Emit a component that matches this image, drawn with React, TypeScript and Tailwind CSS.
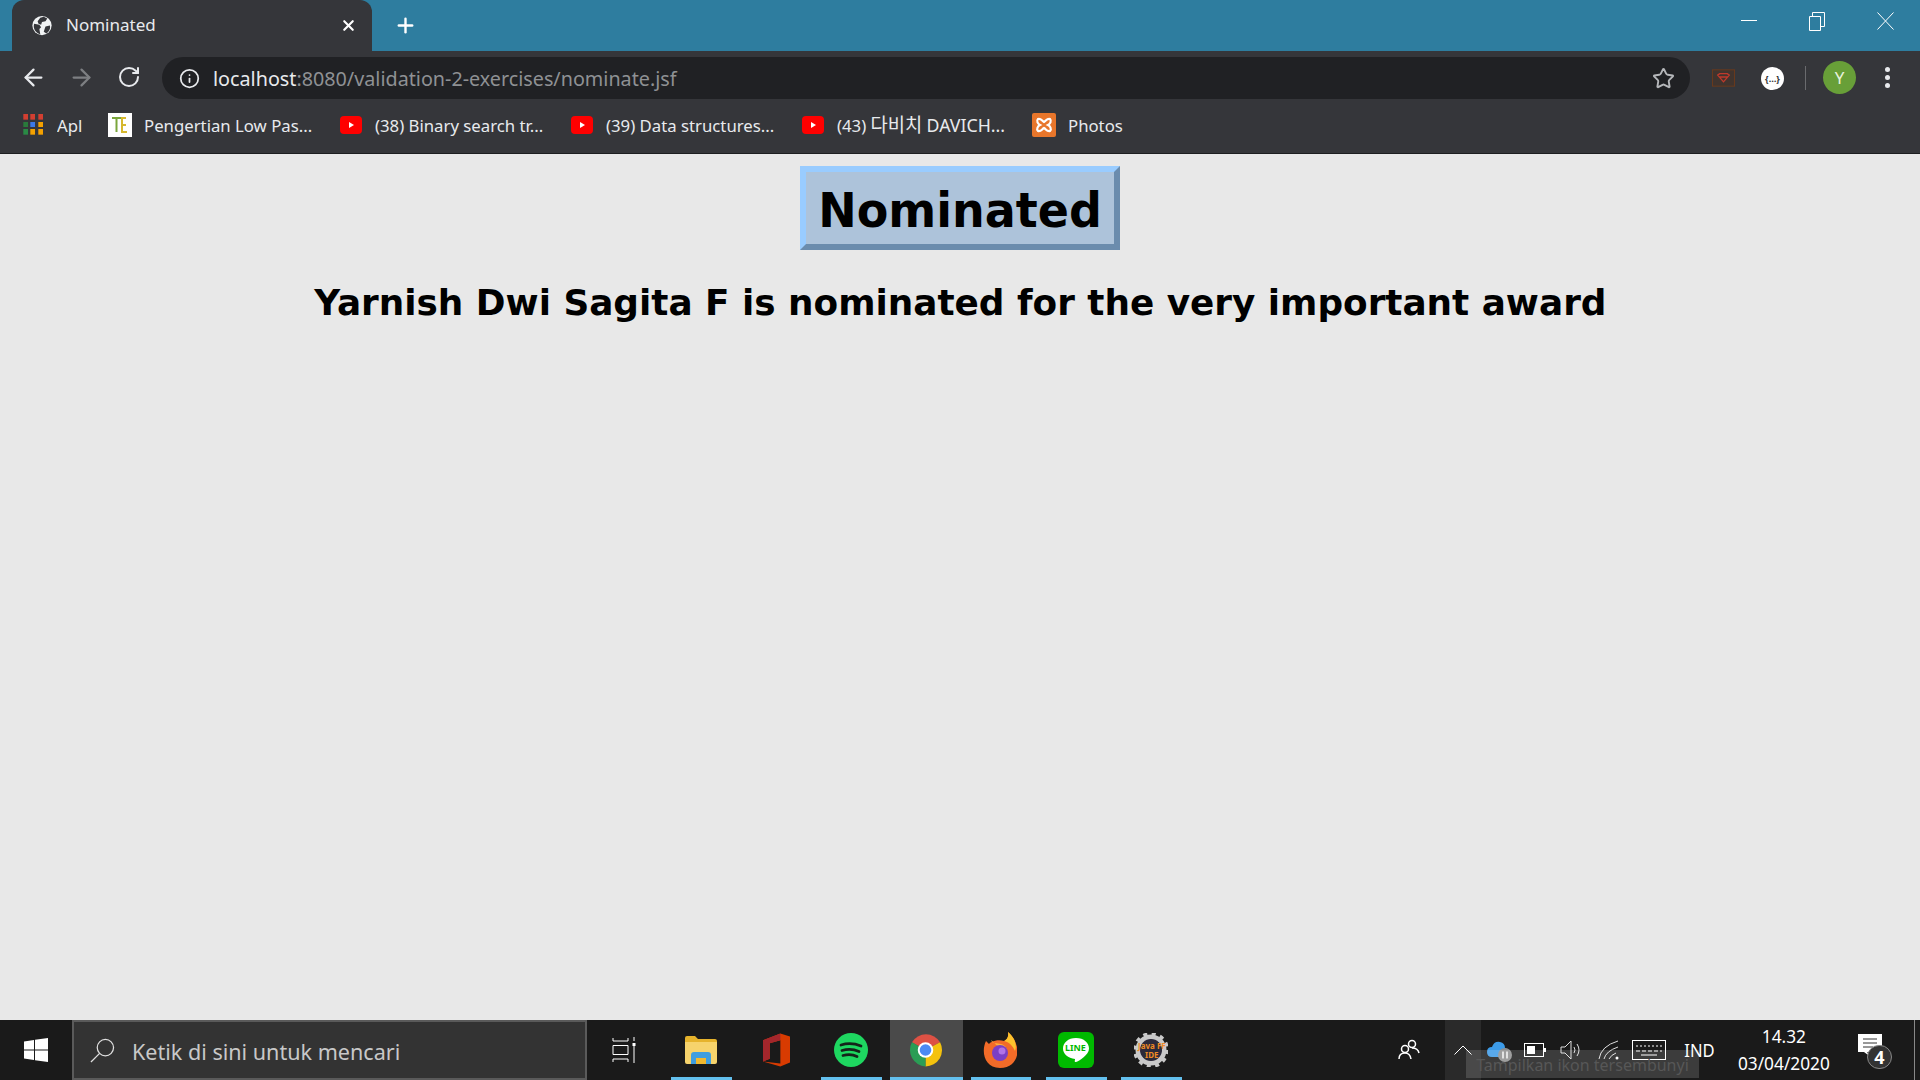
import { ArrowLeft, ArrowRight, RotateCw, Info, Star, X, Plus } from "lucide-react";

const sans = "font-['Noto_Sans','Noto_Sans_CJK_KR',sans-serif]";

function Youtube({ className }: { className: string }) {
  return (
    <svg viewBox="0 0 22 18" className={`w-[22px] h-[18px] shrink-0 ${className}`}>
      <rect width="22" height="18" rx="4" fill="#f00" />
      <path d="M9 6l5 3-5 3z" fill="#fff" />
    </svg>
  );
}

function AppsGrid() {
  const colors = ["#d23f31", "#d23f31", "#d23f31", "#2a7a3b", "#3b78e7", "#f4a100", "#2a8a45", "#f4a100", "#f4a100"];
  return (
    <div className="grid grid-cols-3 gap-[2px] w-5 h-[21px] shrink-0">
      {colors.map((c, i) => (
        <svg key={i} viewBox="0 0 5 6" className="w-full h-full">
          <rect width="5" height="6" fill={c} />
        </svg>
      ))}
    </div>
  );
}

function Bookmark({ children, className }: { children: React.ReactNode; className: string }) {
  return <span className={`text-[17px] leading-none text-[#e8eaed] whitespace-nowrap scale-x-[0.985] origin-left mt-[1px] ${className}`}>{children}</span>;
}

function TaskIcon({ active, lit, width, children }: { active?: boolean; lit?: boolean; width: string; children: React.ReactNode }) {
  return (
    <div className={`h-full flex items-center justify-center relative pr-[2px] ${width} ${lit ? "bg-[#4a4a4a]" : ""}`}>
      {children}
      {active && <div className="absolute bottom-0 left-0 right-0 h-[3px] bg-[#63c0ee]" />}
    </div>
  );
}

export default function App() {
  return (
    <div className={`w-[1920px] h-[1080px] flex flex-col overflow-hidden bg-[#e8e8e8] ${sans}`}>
      {/* title bar */}
      <div className="h-[51px] bg-[#2e7d9f] flex items-end shrink-0">
        <div className="ml-3 w-[360px] h-full bg-[#35363a] rounded-t-[12px] flex items-center">
          <svg viewBox="0 0 24 24" className="ml-[19px] w-[22px] h-[21px] shrink-0">
            <circle cx="12" cy="12" r="11" fill="#f1f3f4" />
            <path d="M3 10l6 1 2 3-2 2 1 6C6 21 1 16 3 10zM14 2l4 2-2 3-4 1-1 3-3-1-1-3 3-4zM16 13l5-1c1 4-1 7-4 9l-3-2 1-3z" fill="#35363a" />
          </svg>
          <span className="ml-[13px] -mt-[2px] text-[17px] text-[#e8eaed]">Nominated</span>
          <X className="ml-auto mr-[15px] w-[17px] h-[17px] text-white" strokeWidth={3} />
        </div>
        <Plus className="ml-[22px] mb-[14px] w-[23px] h-[23px] text-white" strokeWidth={2.5} />
        <div className="ml-auto h-full flex items-start text-white pt-[11px]">
          <svg viewBox="0 0 16 20" className="w-4 h-5 mr-[52px]"><path d="M0 9.500h16" stroke="#fff" strokeWidth="1" /></svg>
          <svg viewBox="0 0 16 20" className="w-4 h-5 mr-[52px]">
            <path d="M.5 5.500h11v14H.5zM3.500 5V1.500h12v14H12" stroke="#fff" fill="none" />
          </svg>
          <svg viewBox="0 0 17 18" className="w-[17px] h-[18px] mt-[1px] mr-[26px]"><path d="M.5.500l16 17M16.500.500l-16 17" stroke="#fff" fill="none" /></svg>
        </div>
      </div>

      {/* toolbar */}
      <div className="h-[48px] pt-[6px] bg-[#35363a] flex items-start shrink-0">
        <ArrowLeft className="ml-[20px] mt-[7px] w-[27px] h-[27px] text-[#e8eaed]" strokeWidth={2} />
        <ArrowRight className="ml-[21px] mt-[7px] w-[27px] h-[27px] text-[#7d7f82]" strokeWidth={2} />
        <RotateCw className="ml-[22px] mt-[8px] w-[24px] h-[24px] text-[#e8eaed]" strokeWidth={2} />
        <div className="ml-[21px] w-[1528px] h-[42px] rounded-full bg-[#202124] flex items-center">
          <Info className="ml-[17px] w-[21px] h-[21px] text-[#e8eaed]" strokeWidth={2} />
          <span className="ml-[13px] mt-[1px] text-[20px] whitespace-nowrap scale-x-[0.987] origin-left text-[#e8eaed]">
            localhost<span className="text-[#8f9194]">:8080/validation-2-exercises/nominate.jsf</span>
          </span>
          <Star className="ml-auto mr-[15px] w-[23px] h-[23px] text-[#b5b7ba]" strokeWidth={2} />
        </div>
        <svg viewBox="0 0 24 18" className="ml-[22px] mt-[12px] w-[23px] h-[18px] shrink-0">
          <rect x=".5" y=".5" width="23" height="17" fill="#40342e" stroke="#6b3a1c" />
          <path d="M6 6l2-1.500h8l2 1.500-6 7zM8 8h8" stroke="#c0392b" strokeWidth="1.400" fill="none" />
        </svg>
        <div className="ml-[26px] mt-[10px] w-[23px] h-[23px] rounded-full bg-white flex items-center justify-center text-[9px] leading-none text-[#333] font-bold shrink-0">{"{…}"}</div>
        <div className="ml-[21px] mt-[9px] w-px h-[24px] bg-[#6a6b6e] shrink-0" />
        <div className="ml-[17px] mt-[4px] w-[33px] h-[33px] rounded-full bg-[#689f38] flex items-center justify-center text-[#e8f2dc] text-[17px] shrink-0">Y</div>
        <div className="ml-[29px] mt-[10px] flex flex-col gap-[3px] shrink-0">
          <div className="w-[5px] h-[5px] rounded-full bg-[#e8eaed]" />
          <div className="w-[5px] h-[5px] rounded-full bg-[#e8eaed]" />
          <div className="w-[5px] h-[5px] rounded-full bg-[#e8eaed]" />
        </div>
      </div>

      {/* bookmarks */}
      <div className="h-[55px] pb-[3px] bg-[#35363a] border-b border-[#1d1e20] flex items-center shrink-0">
        <div className="ml-[23px]"><AppsGrid /></div>
        <Bookmark className="ml-[14px] w-[37px]">Apl</Bookmark>
        <svg viewBox="0 0 24 24" className="ml-[14px] w-6 h-6 shrink-0">
          <rect width="24" height="24" fill="#fff" />
          <path d="M4 5h9M8.500 5v14" stroke="#7aa63c" strokeWidth="2" />
          <path d="M18 5h-4v14h5M14 12h4" stroke="#d6b82e" strokeWidth="2" fill="none" />
        </svg>
        <Bookmark className="ml-3 w-[196px]">Pengertian Low Pas...</Bookmark>
        <Youtube className="" />
        <Bookmark className="ml-[13px] w-[196px]">(38) Binary search tr...</Bookmark>
        <Youtube className="" />
        <Bookmark className="ml-[13px] w-[196px]">(39) Data structures...</Bookmark>
        <Youtube className="" />
        <Bookmark className="ml-[13px] w-[195px]">
          (43) <span className="text-[19px]">다비치</span> <span className="text-[18px]">DAVICH...</span>
        </Bookmark>
        <svg viewBox="0 0 24 24" className="w-6 h-6 shrink-0">
          <rect width="24" height="24" rx="2" fill="#e8762b" />
          <path d="M6 6c3-1 4 2 6 3 2-1 3-4 6-3 2 2 0 5-2 6 2 1 4 4 2 6-3 1-4-2-6-3-2 1-3 4-6 3-2-2 0-5 2-6-2-1-4-4-2-6z" fill="none" stroke="#fff" strokeWidth="2.200" />
        </svg>
        <Bookmark className="ml-3">Photos</Bookmark>
      </div>

      {/* page */}
      <main className="flex-1 flex flex-col items-center font-['DejaVu_Sans',sans-serif]">
        <h1 className="mt-3 w-[320px] h-[84px] pt-[3px] flex items-center justify-center bg-[#adc3da] border-[6px] border-t-[#99ccff] border-l-[#99ccff] border-b-[#6b8cad] border-r-[#6b8cad] font-bold text-black">
          <span className="text-[48px] scale-x-[0.958]">Nominated</span>
        </h1>
        <h2 className="mt-[29px] text-[36px] leading-[48px] font-bold text-black scale-x-[0.995]">
          Yarnish Dwi Sagita F is nominated for the very important award
        </h2>
      </main>

      {/* taskbar */}
      <footer className="h-[60px] bg-[#1a1a1a] flex items-center shrink-0 relative">
        <svg viewBox="0 0 24 24" className="ml-6 w-6 h-6 shrink-0" fill="#fff">
          <path d="M0 3.500l10-1.500v9.500H0zM11 1.800L24 0v11.500H11zM0 12.500h10V22L0 20.500zM11 12.500h13V24l-13-1.800z" />
        </svg>
        <div className="ml-[24px] w-[515px] h-full bg-[#333333] border-2 border-[#5a5a5a] flex items-center shrink-0">
          <svg viewBox="0 0 26 26" className="ml-[16px] w-[25px] h-[27px] shrink-0" stroke="#e0e0e0" fill="none" strokeWidth="1.300">
            <circle cx="16" cy="10" r="8.500" />
            <path d="M10 16L1 25" />
          </svg>
          <span className="ml-[17px] mt-[2px] text-[22px] text-[#c8c8c8] scale-x-[0.98] origin-left whitespace-nowrap">Ketik di sini untuk mencari</span>
        </div>
        <svg viewBox="0 0 24 26" className="ml-[25px] w-6 h-[26px] shrink-0" stroke="#fff" fill="none">
          <path d="M1 1v3h15V1M1 8.500h15v9H1zM1 25v-3h15v3M22 0v4M22 9v17" />
          <rect x="20.500" y="6" width="3" height="3" fill="#fff" stroke="none" />
        </svg>
        <div className="ml-[35px] flex h-full">
          <TaskIcon active width="w-[61px]">
            <svg viewBox="0 0 32 28" className="w-8 h-7">
              <path d="M0 2q0-2 2-2h8l3 3h17q2 0 2 2v21H2q-2 0-2-2z" fill="#e6b32c" />
              <path d="M0 6h32v20q0 2-2 2H2q-2 0-2-2z" fill="#f6d36c" />
              <path d="M6 28v-9q0-3 3-3h14q3 0 3 3v9h-5v-6H11v6z" fill="#3f9ee0" />
              <rect x="11" y="22" width="10" height="6" fill="#f1b92f" />
            </svg>
          </TaskIcon>
          <div className="w-[89px] flex items-center justify-center">
            <svg viewBox="0 0 28 34" className="w-[27px] h-[34px]">
              <path d="M0 7L18 0l10 3v27l-10 4L0 29l18 2V7L7 10v16l-7 3z" fill="#d83b01" />
              <path d="M0 7L18 0v7L7 10v16l-7 3z" fill="#a4262c" />
            </svg>
          </div>
          <TaskIcon active width="w-[61px]">
            <svg viewBox="0 0 34 34" className="w-[34px] h-[34px]">
              <circle cx="17" cy="17" r="17" fill="#1ed760" />
              <path d="M7 12q10-3 20 1M8 17.500q9-2.500 17 1M9 22.500q8-2 14 1" stroke="#14241a" strokeWidth="2.800" fill="none" strokeLinecap="round" />
            </svg>
          </TaskIcon>
          <div className="w-2" />
          <TaskIcon active lit width="w-[73px]">
            <svg viewBox="0 0 34 34" className="w-[33px] h-[34px]">
              <path d="M17 17L3 9A17 17 0 0 1 32 9z" fill="#dd5144" />
              <path d="M17 17L32 9a17 17 0 0 1-15 25z" fill="#f4c20d" />
              <path d="M17 17v17A17 17 0 0 1 3 9z" fill="#2a9d55" />
              <circle cx="17" cy="17" r="8" fill="#fff" />
              <circle cx="17" cy="17" r="6" fill="#4a8af4" />
            </svg>
          </TaskIcon>
          <div className="w-2" />
          <TaskIcon active width="w-[60px]">
            <svg viewBox="0 0 34 36" className="w-[34px] h-9">
              <path d="M3 9c-5 10-2 27 14 27s20-15 16-24c-1-5-5-9-8-12 1 6-2 8-4 9C16 7 8 9 6 12z" fill="#f26b28" />
              <path d="M25 0c1 6-2 8-4 9 5 1 9 5 11 10 3-7-2-15-7-19z" fill="#fdc32d" />
              <path d="M8 8c1 4 6 3 10 4 5 1 7 6 5 10z" fill="#fbb03b" />
              <circle cx="17" cy="21" r="8" fill="#7b3fc4" />
              <circle cx="19" cy="19" r="3.500" fill="#b173e6" />
            </svg>
          </TaskIcon>
          <div className="w-[15px]" />
          <TaskIcon active width="w-[61px]">
            <svg viewBox="0 0 36 36" className="w-9 h-9">
              <rect width="36" height="36" rx="6" fill="#00b900" />
              <path d="M18 6C10 6 5 11 5 16.500 5 22 10 26 17 27c0 2-1 3 1 3 3-1 13-7 13-13.500C31 11 26 6 18 6z" fill="#fff" />
            </svg>
            <span className="absolute top-[23px] left-[19px] text-[9px] leading-none font-bold text-[#00b900]">LINE</span>
          </TaskIcon>
          <div className="w-[14px]" />
          <TaskIcon active width="w-[61px]">
            <svg viewBox="0 0 34 34" className="w-[34px] h-[34px]">
              <circle cx="17" cy="17" r="13" fill="none" stroke="#c9c9c9" strokeWidth="5" />
              <circle cx="17" cy="17" r="16" fill="none" stroke="#c9c9c9" strokeWidth="4" strokeDasharray="4 4.400" />
              <circle cx="17" cy="17" r="11" fill="#2c2a3a" />
            </svg>
            <span className="absolute top-[21px] left-[17px] text-[8px] leading-[9px] text-center font-bold text-[#f08a24]">Java FF<br />IDE</span>
          </TaskIcon>
        </div>

        <div className="ml-auto flex items-center h-full">
          <svg viewBox="0 0 24 24" className="w-6 h-6 mr-[24px] -mt-[3px] shrink-0" stroke="#fff" fill="none" strokeWidth="1.500">
            <circle cx="15" cy="7" r="3.500" /><circle cx="8" cy="12" r="3.500" />
            <path d="M2 22q0-6 6-6 5 0 6 6M15 11q6 0 7 5" />
          </svg>
          <div className="w-9 h-full bg-[#2a2a2a] flex items-center justify-center shrink-0">
            <svg viewBox="0 0 18 10" className="w-[18px] h-[10px]" stroke="#fff" fill="none"><path d="M.5 9.500L9 1l8.500 8.500" /></svg>
          </div>
          <div className="ml-[6px] relative w-[22px] h-[18px] shrink-0">
            <svg viewBox="0 0 22 18" className="w-[22px] h-[18px]">
              <path d="M5 16q-5 0-5-5t5-5q2-6 8-5 5 1 5 6 4 1 4 4.500T18 16z" fill="#3c9be8" />
            </svg>
            <svg viewBox="0 0 14 14" className="absolute left-[11px] top-[7px] w-[14px] h-[14px]">
              <circle cx="7" cy="7" r="7" fill="#8f8f8f" />
              <path d="M5 3.500v7M9 3.500v7" stroke="#fff" strokeWidth="1.400" />
            </svg>
          </div>
          <svg viewBox="0 0 22 14" className="ml-[15px] w-[22px] h-[14px] shrink-0" stroke="#fff" fill="none">
            <rect x=".5" y=".5" width="19" height="13" /><rect x="3" y="3" width="8" height="8" fill="#fff" stroke="none" /><path d="M21 5v4" strokeWidth="2" />
          </svg>
          <svg viewBox="0 0 22 20" className="ml-[14px] w-[22px] h-5 shrink-0" stroke="#ddd" fill="none">
            <path d="M1 7h4l6-6v18l-6-6H1zM14 7q2 3 0 6M17 4q4 6 0 12" />
          </svg>
          <svg viewBox="0 0 22 20" className="ml-[16px] w-[22px] h-5 shrink-0" stroke="#ddd" fill="none">
            <path d="M1 19Q3 6 20 1M6 19q2-8 14-12M11 19q2-4 7-6" />
            <circle cx="19" cy="18" r="1.500" fill="#fff" stroke="none" />
          </svg>
          <svg viewBox="0 0 34 20" className="ml-[12px] w-[34px] h-5 shrink-0" stroke="#fff" fill="none">
            <rect x=".5" y=".5" width="33" height="19" /><path d="M4 6h26" strokeDasharray="2 2" /><path d="M4 11h26" strokeDasharray="4 2" /><path d="M9 15h16" />
          </svg>
          <span className="ml-[17px] text-[18px] text-white scale-x-[0.92]">IND</span>
          <div className="ml-[20px] flex flex-col items-center text-white text-[18px] leading-[27px] scale-x-[0.96]">
            <span>14.32</span>
            <span>03/04/2020</span>
          </div>
          <div className="ml-[26px] mr-[26px] relative w-[30px] h-[34px] shrink-0">
            <svg viewBox="0 0 24 24" className="w-6 h-[26px]">
              <path d="M0 0h24v18H9l5 6-8-6H0z" fill="#fff" />
              <path d="M5 5h14M5 9h14M5 13h10" stroke="#333" />
            </svg>
            <div className="absolute right-[-4px] bottom-[-2px] w-[25px] h-[24px] rounded-full bg-[#333] border border-[#888] flex items-center justify-center text-[18px] font-bold leading-none text-white">4</div>
          </div>
          <div className="w-px h-full bg-[#888] mr-[5px]" />
        </div>
        {/* tooltip caught mid-fade */}
        <div className="absolute left-[1466px] top-[30px] w-[233px] h-[28px] bg-[#ffffff26] flex items-center justify-center pt-[2px] text-[16px] text-[#575757] whitespace-nowrap">
          Tampilkan ikon tersembunyi
        </div>
      </footer>
    </div>
  );
}
